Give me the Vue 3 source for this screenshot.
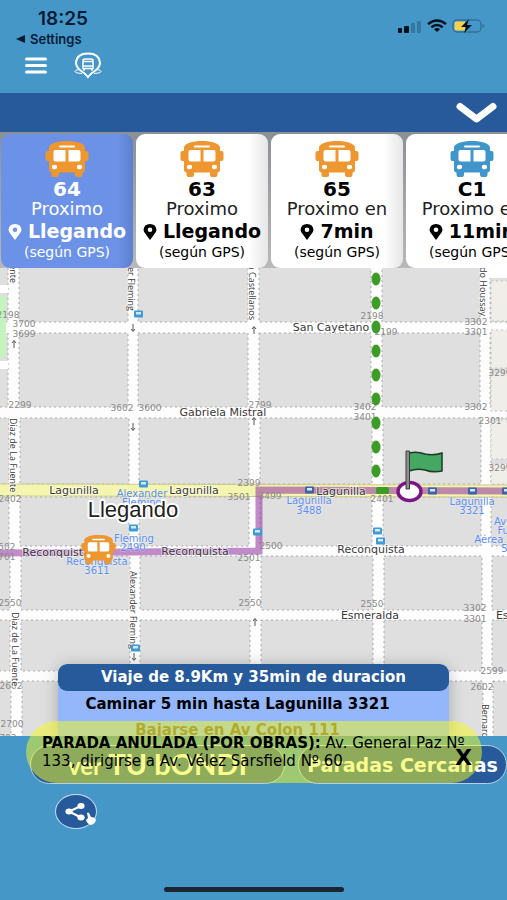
<script setup>
import { ref } from 'vue'

const selected = ref(0)
const showAlert = ref(true)

const lines = [
  { name: '64', label: 'Proximo', eta: 'Llegando', tone: 'orange' },
  { name: '63', label: 'Proximo', eta: 'Llegando', tone: 'orange' },
  { name: '65', label: 'Proximo en', eta: '7min', tone: 'orange' },
  { name: 'C1', label: 'Proximo en', eta: '11min', tone: 'blue' },
]

// City blocks: the cross product of column and row spans.
const columns = [[-12, 8], [19, 128], [138, 248], [259, 371], [382, 480], [490, 524]]
const rows = [[258, 322], [333, 407], [418, 484], [497, 546], [556, 610], [620, 671], [681, 748]]
const blocks = rows.flatMap(([y1, y2], r) =>
  columns.map(([x1, x2]) => ({
    x: x1 + Math.floor(r / 2),
    y: y1,
    w: x2 - x1,
    h: y2 - y1,
  })),
)

const streets = [
  { t: 'San Cayetano', x: 331, y: 331 },
  { t: 'Gabriela Mistral', x: 223, y: 416 },
  { t: 'Lagunilla', x: 74, y: 494 },
  { t: 'Lagunilla', x: 194, y: 494 },
  { t: 'Lagunilla', x: 341, y: 495 },
  { t: 'Reconquista', x: 56, y: 556 },
  { t: 'Reconquista', x: 195, y: 555 },
  { t: 'Reconquista', x: 371, y: 553 },
  { t: 'Esmeralda', x: 370, y: 619 },
  { t: 'Esmeralda', x: 525, y: 619 },
]

const avenues = [
  { t: 'Diaz de La Fuente', x: 10, y: 283, anchor: 'end' },
  { t: 'Diaz de La Fuente', x: 10, y: 418, anchor: 'start' },
  { t: 'Diaz de La Fuente', x: 12, y: 612, anchor: 'start' },
  { t: 'Alexander Fleming', x: 128, y: 311, anchor: 'end' },
  { t: 'Alexander Fleming', x: 130, y: 571, anchor: 'start' },
  { t: 'Merced en Castellanos', x: 249, y: 320, anchor: 'end' },
  { t: 'Bernardo Houssay', x: 480, y: 316, anchor: 'end' },
  { t: 'Bernardo Houssay', x: 482, y: 704, anchor: 'start' },
]

const numbers = [
  ['2198', 8, 318], ['3700', 24, 327], ['3699', 24, 337], ['2299', 20, 408],
  ['3602', 122, 411], ['3600', 150, 411], ['2198', 372, 319], ['3302', 476, 325],
  ['3301', 476, 335], ['2199', 386, 335], ['2799', 260, 408], ['3402', 365, 410],
  ['3401', 365, 420], ['3302', 476, 410], ['2301', 490, 424], ['3299', 500, 376],
  ['2402', 10, 502], ['3501', 239, 500], ['2399', 249, 486], ['3499', 270, 499],
  ['2401', 382, 502], ['2502', 4, 550], ['2701', 4, 560], ['2500', 271, 549],
  ['2501', 249, 561], ['2550', 10, 606], ['2550', 250, 606], ['2550', 372, 607],
  ['3302', 475, 611], ['3301', 475, 622], ['3299', 500, 471], ['2602', 11, 689],
  ['2700', 12, 727], ['2703', 5, 741], ['2599', 492, 674], ['2602', 482, 690],
]

const stops = [
  ['Alexander', 142, 497], ['Fleming', 142, 506], ['Fleming', 134, 542], ['2490', 133, 551],
  ['Reconquista', 97, 565], ['3611', 97, 574], ['Lagunilla', 309, 504], ['3488', 309, 514],
  ['Lagunilla', 472, 505], ['3321', 472, 514], ['Avenida', 514, 525], ['Fuerza', 514, 534],
  ['Aérea Arg', 499, 543], ['5500', 514, 552],
]

const stopIcons = [
  [138, 314], [143, 484], [133, 528], [135, 648], [309, 490], [377, 531], [380, 541],
  [432, 491], [472, 491], [506, 491], [257, 532],
]

const arrows = [
  [133, 328, 1], [133, 427, 1], [14, 344, -1], [254, 330, -1], [254, 421, -1],
  [255, 622, -1], [134, 657, 1],
]

const walkDots = [279, 303, 327, 351, 375, 399, 423, 447, 471]
</script>

<template>
  <main class="app">
    <header class="top">
      <div class="status">
        <div class="clock">
          <span class="time">18:25</span>
          <a class="back" href="#settings">
            <svg width="9" height="8" viewBox="0 0 9 8" aria-hidden="true"><path d="M0 4 9 0v8z" fill="#061a36" /></svg>
            Settings
          </a>
        </div>
        <div class="signals">
          <svg width="24" height="14" viewBox="0 0 24 14" aria-hidden="true">
            <rect x="0" y="9" width="4" height="5" rx="1" fill="#06101f" />
            <rect x="6" y="7" width="5" height="7" rx="1" fill="#06101f" />
            <rect x="13" y="4" width="4" height="10" rx="1" fill="#3578a3" />
            <rect x="19" y="2" width="4" height="12" rx="1" fill="#3578a3" />
          </svg>
          <svg width="20" height="14" viewBox="0 0 20 14" fill="none" stroke="#06101f" stroke-width="2.4" aria-hidden="true">
            <path d="M1 5.2Q10-2.4 19 5.2" />
            <path d="M4.3 8.3q5.7-4.6 11.4 0" />
            <path d="M7 10.2q3-2.2 6 0L10 13z" fill="#06101f" stroke="none" />
          </svg>
          <svg width="33" height="14" viewBox="0 0 33 14" aria-hidden="true">
            <rect x="1" y="1" width="28" height="12" rx="4" fill="none" stroke="#32719b" stroke-width="1.4" />
            <path d="M30.500 5v4q2-.5 2-2t-2-2z" fill="#32719b" />
            <path d="M4.500 2.500H13v9H4.500q-2 0-2-2v-5q0-2 2-2z" fill="#f6d14e" />
            <path d="M17 0 9 8h5l-2 6 8-8h-5z" fill="#06101f" />
          </svg>
        </div>
      </div>
      <nav class="nav">
        <button class="icon-btn" type="button" aria-label="Menu">
          <svg width="22" height="17" viewBox="0 0 22 17" stroke="#fff" stroke-width="3" stroke-linecap="round" aria-hidden="true">
            <path d="M1.500 2h19M1.500 8.500h19M1.500 15h19" />
          </svg>
        </button>
        <a class="logo" href="#inicio" aria-label="Inicio">
          <svg width="28" height="27" viewBox="0 0 28 27" fill="none" stroke="#fff" aria-hidden="true">
            <path d="M14 25Q11.500 21.500 6.500 18.500 2 15 2 10.500 3 1.500 14 1.500T26 10.500Q26 15 21.500 18.500 16.500 21.500 14 25z" stroke-width="2" />
            <path d="M5 17.500Q1 18 1 19.500T8 21.500M23 17.500q4 .5 4 2t-7 2" stroke-width="1" />
            <path d="M9 16.500V8.500q0-1.500 2-1.500h6q2 0 2 1.500v8zM9 9.500h10M9 14h10" stroke-width="1.500" />
            <path d="M10 17v1.500M18 17v1.500" stroke-width="2" />
          </svg>
        </a>
      </nav>
    </header>

    <button class="toggle" type="button" aria-label="Mostrar opciones">
      <svg width="41" height="22" viewBox="0 0 41 22" fill="none" stroke="#fff" stroke-width="7" stroke-linecap="round" stroke-linejoin="round" aria-hidden="true">
        <path d="M4 4.500 20.500 17 37 4.500" />
      </svg>
    </button>

    <section class="map-area">
      <svg class="map" viewBox="0 132 507 604" preserveAspectRatio="xMidYMin slice" role="img" aria-label="Mapa">
        <rect y="132" width="507" height="604" fill="#fdfdfd" />
        <rect
          v-for="(b, i) in blocks" :key="'b' + i"
          :x="b.x" :y="b.y" :width="b.w" :height="b.h"
          class="block"
        />
        <path d="M0 285h8v8H0zM0 361h8v8H0z" fill="#fff" />
        <rect x="0" y="296" width="6" height="62" fill="#c5f3bd" />
        <g class="plot">
          <rect x="491" y="281" width="24" height="40" />
          <rect x="491" y="330" width="24" height="38" />
          <rect x="491" y="373" width="24" height="38" />
          <rect x="491" y="420" width="24" height="39" />
          <rect x="491" y="464" width="24" height="20" />
        </g>
        <path d="M489 268h18v10h-18z" fill="#fff" />
        <path d="M0 490 507 491" stroke="#c9c98c" stroke-width="13" />
        <path d="M0 490 507 491" stroke="#f4f5ae" stroke-width="11" />
        <path class="route" d="M0 553 130 552 259 551V490L507 491" />

        <text v-for="(n, i) in numbers" :key="'n' + i" class="number" :x="n[1]" :y="n[2]">{{ n[0] }}</text>
        <text v-for="(s, i) in streets" :key="'s' + i" class="street" :x="s.x" :y="s.y">{{ s.t }}</text>
        <text
          v-for="(a, i) in avenues" :key="'a' + i" class="avenue"
          :text-anchor="a.anchor" :transform="`translate(${a.x} ${a.y}) rotate(90)`"
        >{{ a.t }}</text>
        <text v-for="(s, i) in stops" :key="'p' + i" class="stop" :x="s[1]" :y="s[2]">{{ s[0] }}</text>

        <g v-for="(s, i) in stopIcons" :key="'i' + i" :transform="`translate(${s[0]} ${s[1]})`">
          <rect x="-4" y="-3.500" width="9" height="7" rx="1" :fill="s[1] > 488 && s[1] < 493 ? '#3f62ad' : '#3f9bd6'" />
          <rect x="-2" y="-2" width="5" height="2.500" fill="#d5e8f7" />
        </g>
        <path
          v-for="(a, i) in arrows" :key="'r' + i" class="arrow"
          :transform="`translate(${a[0]} ${a[1]}) scale(1 ${a[2]})`"
          d="M0-4V3M-2 1 0 3.500 2 1"
        />

        <ellipse v-for="y in walkDots" :key="y" cx="376" :cy="y" rx="4.500" ry="6.500" fill="#3d9b28" />
        <rect x="376" y="487" width="13" height="7" rx="2" fill="#3d9b28" />

        <ellipse cx="409.500" cy="491.500" rx="11.500" ry="9" fill="#fff" stroke="#7c1687" stroke-width="3.500" />
        <path d="M409 453q8-2 16 1 8 2 17-1v18q-9 2-17-1-8-2-16 1z" fill="#44a863" stroke="#193d29" stroke-width="1.500" />
        <path d="M406 451h3.500v38H406z" fill="#8e8e8e" stroke="#3c3c3c" stroke-width="1" />

        <g transform="translate(81 535)">
          <use href="#bus-shape" width="35" height="29" color="#ee962f" />
        </g>
        <text class="bus-label" x="133" y="517">Llegando</text>
      </svg>

      <svg class="defs" aria-hidden="true">
        <symbol id="bus-shape" viewBox="0 0 44 36" preserveAspectRatio="none">
          <path
            fill="currentColor"
            d="M22 0C12 0 4.500 2.500 4 6.500V10H2.500Q.5 10 .5 12v6q0 2 2 2H4v9q0 2 2.500 2.500V34q0 2 2 2h3.500q2 0 2-2v-2.500h16V34q0 2 2 2h3.500q2 0 2-2v-2.500Q40 31 40 29v-9h1.500q2 0 2-2v-6q0-2-2-2H40V6.500C39.500 2.500 32 0 22 0z"
          />
          <path fill="#fff" d="M15 4.500h14q1 0 1 1t-1 1H15q-1 0-1-1t1-1zM10.500 9H20.500V20.500H10.500Q8.500 20.500 8.500 18.500V11Q8.500 9 10.500 9zM23.500 9H33.500q2 0 2 2v7.500q0 2-2 2H23.500z" />
          <ellipse fill="#fff" cx="9.500" cy="26" rx="2.600" ry="2.300" />
          <ellipse fill="#fff" cx="34.500" cy="26" rx="2.600" ry="2.300" />
        </symbol>
      </svg>

      <div class="overlay">
        <div class="cards">
          <button
            v-for="(l, i) in lines" :key="l.name" type="button"
            class="card" :class="{ active: selected === i }"
            @click="selected = i"
          >
            <svg class="bus" :class="l.tone" aria-hidden="true"><use href="#bus-shape" width="44" height="36" /></svg>
            <span class="name">{{ l.name }}</span>
            <span class="label">{{ l.label }}</span>
            <span class="eta">
              <svg width="14" height="16" viewBox="0 0 13 16" aria-hidden="true">
                <path fill="currentColor" fill-rule="evenodd" d="M6.500 16Q5 14 3 11.200 0 8 0 6 .5 0 6.500 0T13 6q0 2-3 5.200Q8 14 6.500 16zM6.500 3.500a2.300 2.300 0 1 0 0 4.600 2.300 2.300 0 0 0 0-4.600z" />
              </svg>
              {{ l.eta }}
            </span>
            <span class="gps">(según GPS)</span>
          </button>
        </div>

        <div class="trip">
          <h2 class="trip-title">Viaje de 8.9Km y 35min de duracion</h2>
          <p class="step">Caminar 5 min hasta Lagunilla 3321</p>
          <p class="step off">Bajarse en Av Colon 111</p>
        </div>
      </div>
    </section>

    <footer class="bottom">
      <div class="actions">
        <button class="pill brand" type="button"><span>ver</span> TU bONDI</button>
        <button class="pill near" type="button">Paradas Cercanas</button>
      </div>
      <button class="share" type="button" aria-label="Compartir">
        <svg width="40" height="33" viewBox="0 0 40 33" aria-hidden="true">
          <path d="M25 11 13 16.500 25 22.500" fill="none" stroke="#fff" stroke-width="2" />
          <ellipse cx="25" cy="11" rx="3.600" ry="3" fill="#fff" />
          <ellipse cx="13" cy="16.500" rx="3.600" ry="3" fill="#fff" />
          <ellipse cx="25" cy="22.500" rx="3.600" ry="3" fill="#fff" />
          <path d="M31 18q1-1 2 0l2 4q4 0 5 3-1 4-5 5-4-1-5-5l2-2z" fill="#fff" />
        </svg>
      </button>
      <div class="home-bar"></div>

      <div v-if="showAlert" class="alert" role="alert">
        <p><strong>PARADA ANULADA (POR OBRAS):</strong> Av. General Paz Nº 133, dirigirse a Av. Vélez Sarsfield Nº 60</p>
        <button class="close" type="button" @click="showAlert = false">X</button>
      </div>
    </footer>
  </main>
</template>

<style>
body {
  margin: 0;
  background: #4597c8;
}
</style>

<style scoped>
.app {
  display: flex;
  flex-direction: column;
  min-height: 100vh;
  overflow: hidden;
  background: #4597c8;
  color: #000;
  font-family: "DejaVu Sans", Verdana, sans-serif;
}
button {
  margin: 0;
  padding: 0;
  border: 0;
  background: none;
  color: inherit;
  font: inherit;
  cursor: pointer;
}
svg {
  display: block;
}
.top {
  height: 93px;
  color: #061a36;
  font-family: Inter, "Liberation Sans", sans-serif;
  font-weight: 600;
}
.status {
  display: flex;
  justify-content: space-between;
  padding: 8px 22px 0 16px;
}
.clock {
  display: flex;
  flex-direction: column;
}
.time {
  padding-left: 22px;
  font-size: 19px;
  line-height: 22px;
}
.back {
  display: flex;
  align-items: center;
  gap: 5px;
  color: inherit;
  font-size: 13px;
  line-height: 18px;
  text-decoration: none;
}
.signals {
  display: flex;
  gap: 5px;
  padding-top: 11px;
}
.nav {
  display: flex;
  align-items: center;
  gap: 27px;
  padding: 4px 25px 0;
}
.toggle {
  display: flex;
  align-items: center;
  justify-content: flex-end;
  height: 39px;
  padding-right: 10px;
  background: #265a9a;
}
.map-area {
  display: grid;
  flex: 1;
  grid-template: minmax(0, 1fr) / minmax(0, 1fr);
}
.map,
.overlay {
  grid-area: 1 / 1;
}
.map {
  width: 100%;
  height: 100%;
}
.defs {
  position: absolute;
  width: 0;
  height: 0;
}
.block {
  fill: #dfdfdf;
  stroke: #aaa;
  stroke-width: 1;
  stroke-dasharray: 2 3;
}
.plot {
  fill: #f0eee9;
  stroke: #c4c0bb;
  stroke-width: 1;
  stroke-dasharray: 2 3;
}
.route {
  fill: none;
  stroke: #9a3fa6;
  stroke-opacity: 0.6;
  stroke-width: 7;
}
.number,
.street,
.stop,
.bus-label {
  text-anchor: middle;
}
.number {
  fill: #8a8a8a;
  font-size: 9px;
}
.street,
.avenue {
  fill: #3a3a3a;
  stroke: rgba(255, 255, 255, 0.6);
  stroke-width: 2px;
  paint-order: stroke;
}
.street {
  font-size: 11px;
}
.avenue {
  font-family: "Open Sans", "Noto Sans", sans-serif;
  font-size: 9px;
}
.stop {
  fill: #5b8df0;
  stroke: rgba(255, 255, 255, 0.4);
  stroke-width: 1px;
  paint-order: stroke;
  font-size: 10px;
}
.arrow {
  fill: none;
  stroke: #555;
  stroke-width: 1;
}
.bus-label {
  fill: #222;
  stroke: #fff;
  stroke-width: 4px;
  stroke-linejoin: round;
  paint-order: stroke;
  font-family: "Liberation Sans", Arial, sans-serif;
  font-size: 22px;
}
.overlay {
  display: flex;
  flex-direction: column;
  justify-content: space-between;
  min-width: 0;
}
.cards {
  display: flex;
  gap: 3px;
  padding: 2px 1px 0;
  overflow: hidden;
  background: linear-gradient(#8b8f96, #b9b9b9);
}
.card {
  display: flex;
  flex: none;
  flex-direction: column;
  align-items: center;
  width: 132px;
  height: 134px;
  padding-top: 7px;
  border-radius: 9px;
  background: linear-gradient(90deg, #fff 85%, #e6e6e6);
  white-space: nowrap;
}
.card.active {
  background: linear-gradient(90deg, #6c92e8 88%, #5d80cf);
  color: #fff;
}
.bus {
  width: 44px;
  height: 36px;
}
.bus.orange {
  color: #ee962f;
}
.bus.blue {
  color: #4095ca;
}
.name {
  margin-top: 2px;
  font-size: 20px;
  font-weight: 700;
  line-height: 20px;
}
.label {
  color: #222;
  font-size: 18px;
  line-height: 20px;
}
.active .label {
  color: #fff;
}
.eta {
  display: flex;
  align-items: center;
  gap: 6px;
  font-size: 19px;
  font-weight: 700;
  line-height: 25px;
}
.gps {
  font-size: 14px;
  line-height: 16px;
}
.trip {
  width: 77%;
  height: 72px;
  margin: 0 auto;
  overflow: hidden;
  border-radius: 9px 9px 0 0;
  background: #94b7fb;
  box-shadow: 0 2px 16px rgba(0, 0, 0, 0.25);
  font-size: 15px;
  font-weight: 700;
  text-align: center;
  white-space: nowrap;
}
.trip-title {
  margin: 0;
  border-radius: 9px;
  background: #265a9a;
  color: #fff;
  font-size: 15px;
  line-height: 27px;
}
.step {
  margin: 0;
  padding-right: 32px;
  line-height: 26px;
}
.step.off {
  color: #6a5a3c;
}
.bottom {
  position: relative;
  display: flex;
  flex-direction: column;
  height: 164px;
}
.actions {
  display: flex;
  gap: 13px;
  padding: 9px 0 0 30px;
}
.pill {
  box-sizing: border-box;
  height: 39px;
  border: 1px solid #b9cfe6;
  border-radius: 20px;
  background: #265a9a;
  color: #fff;
  font-size: 19px;
  font-weight: 700;
  white-space: nowrap;
}
.brand {
  flex: 55;
  font-family: Lato, "DejaVu Sans", sans-serif;
  font-size: 29px;
  line-height: 34px;
}
.brand span {
  font-size: 24px;
}
.near {
  flex: 45;
}
.share {
  width: 40px;
  height: 33px;
  margin: 11px 0 0 56px;
  border-radius: 50%;
  background: #265a9a;
  box-shadow: 0 0 0 1px #c8dcee;
}
.home-bar {
  width: 180px;
  height: 5px;
  margin: auto auto 8px;
  border-radius: 3px;
  background: #1b2630;
}
.alert {
  position: absolute;
  top: -15px;
  right: 25px;
  left: 26px;
  box-sizing: border-box;
  height: 62px;
  padding: 13px 16px;
  border-radius: 31px;
  background: rgba(245, 252, 30, 0.5);
  font-size: 15px;
  line-height: 18px;
}
.alert p {
  margin: 0;
}
.close {
  position: absolute;
  right: 10px;
  bottom: 14px;
  font-size: 22px;
  font-weight: 700;
  line-height: 22px;
}
</style>
